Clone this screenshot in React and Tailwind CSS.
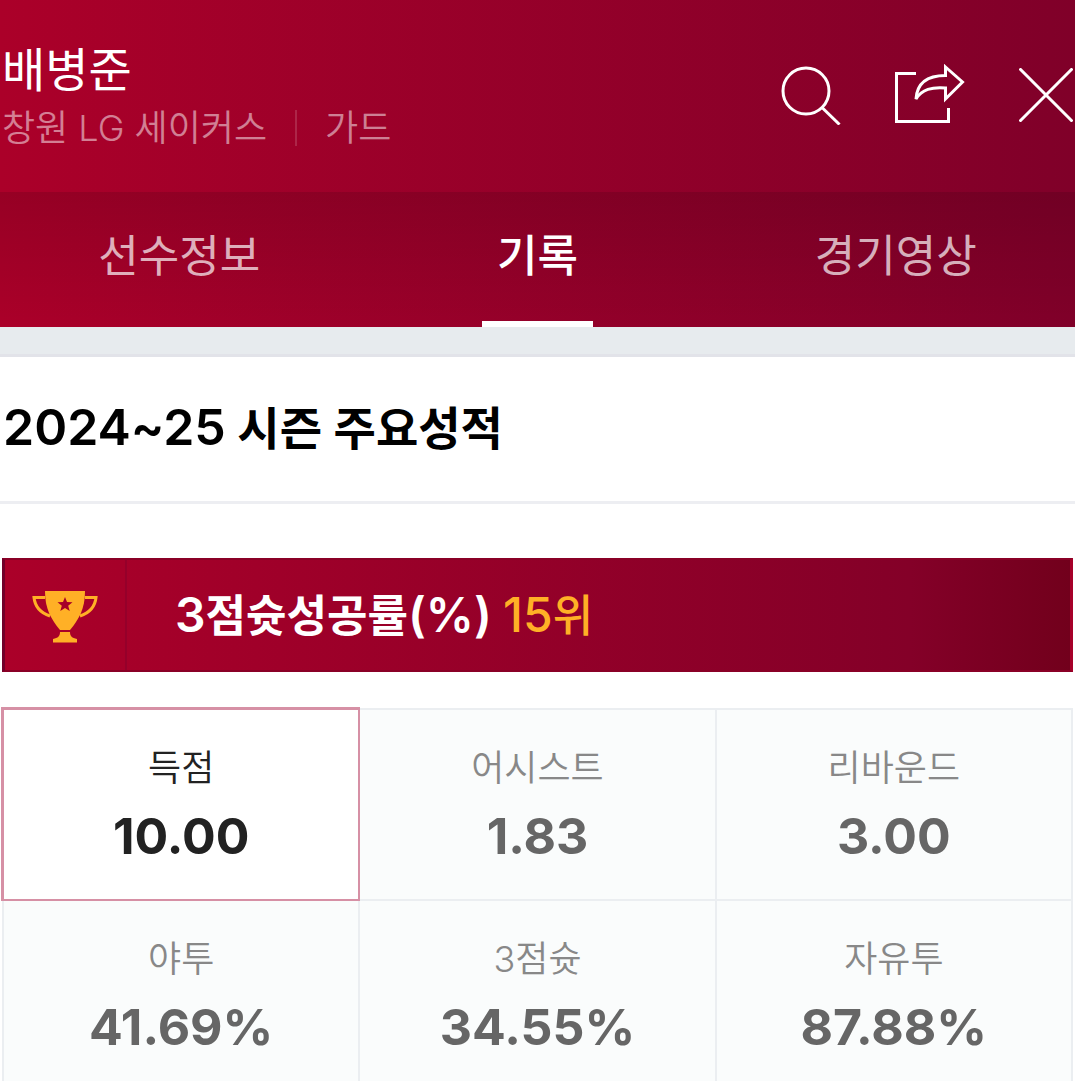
import { useState } from 'react';

const tabs = ['선수정보', '기록', '경기영상'];

const stats = [
  { label: '득점', value: '10.00' },
  { label: '어시스트', value: '1.83' },
  { label: '리바운드', value: '3.00' },
  { label: '야투', value: '41.69%' },
  { label: '3점슛', value: '34.55%' },
  { label: '자유투', value: '87.88%' },
];

const SearchIcon = () => (
  <svg width="60" height="60" viewBox="0 0 60 60" fill="none" stroke="currentColor" strokeWidth="3">
    <circle cx="25" cy="26" r="23" />
    <path d="M41 42.5L58.500 59.500" />
  </svg>
);

const ShareIcon = () => (
  <svg width="70" height="62" viewBox="0 0 70 62" fill="none" stroke="currentColor" strokeWidth="3">
    <path d="M21 9.500H1.500V57.500H53.500V44" />
    <path d="M50.500 3L67.500 18L50.500 35V24C37 23 27 25 21 35C22 19 32 11.500 50.500 11.500Z" />
  </svg>
);

const CloseIcon = () => (
  <svg width="54" height="54" viewBox="0 0 54 54" fill="none" stroke="currentColor" strokeWidth="3">
    <path d="M0.500 0.500L53.500 53.500M53.500 0.500L0.500 53.500" />
  </svg>
);

const TrophyIcon = () => (
  <svg width="66" height="52" viewBox="0 0 66 52" fill="#ffb026">
    <path d="M13 0H53C53 18 47 28 38 39H28C19 28 13 18 13 0Z" />
    <path d="M28 41H38C38 45 40 47 45 48V51.500H21V48C26 47 28 45 28 41Z" />
    <path d="M13 6.500H2C3 16 9 22 18 25M53 6.500H64C63 16 57 22 48 25" fill="none" stroke="#ffb026" strokeWidth="3" />
    <path d="M33 6L35 11L40.500 11.300L36.200 14.700L37.700 20L33 17L28.300 20L29.800 14.700L25.500 11.300L31 11Z" fill="#a60029" />
  </svg>
);

const App = () => {
  const [activeTab, setActiveTab] = useState('기록');
  const [activeStat, setActiveStat] = useState('득점');

  return (
    <div className="min-h-screen overflow-hidden bg-white font-['Inter','Noto_Sans_CJK_KR',sans-serif]">
      {/* Player header */}
      <header className="bg-linear-to-r from-[#ab0029] to-[#800029] text-white">
        <div className="flex h-48 items-start justify-between px-[2px]">
          <div className="pt-[42px]">
            <h1 className="text-[47px] leading-[56px]">배병준</h1>
            <p className="flex items-center text-4xl leading-[60px] text-white/50 font-[350]">
              <span>창원 LG 세이커스</span>
              <span className="mx-7 h-9 w-[2px] bg-white/15" />
              <span>가드</span>
            </p>
          </div>
          <div className="flex items-center gap-[54px] pt-16">
            <button type="button" aria-label="검색"><SearchIcon /></button>
            <button type="button" aria-label="공유"><ShareIcon /></button>
            <button type="button" aria-label="닫기"><CloseIcon /></button>
          </div>
        </div>

        {/* Tabs */}
        <nav className="grid h-[135px] grid-cols-3 bg-linear-to-b from-black/12 to-transparent">
          {tabs.map((tab) => (
            <button
              key={tab}
              type="button"
              onClick={() => setActiveTab(tab)}
              className="flex flex-col items-center justify-between pt-8 text-[44px] leading-[64px]"
            >
              <span className={tab === activeTab ? 'font-medium' : 'text-white/70'}>{tab}</span>
              {tab === activeTab && <span className="h-[6px] w-[111px] bg-white" />}
            </button>
          ))}
        </nav>
      </header>

      <div className="h-[30px] border-b-3 border-[#e2e3e9] bg-[#e7ebee]" />

      <main>
        <h2 className="h-[147px] border-b-3 border-[#edeef2] pt-[38px] pl-[3px] text-[46px] leading-[64px] font-semibold text-black">
          <span className="text-[50px]">2024~25</span> 시즌 주요성적
        </h2>

        <div className="px-[2px] pt-[54px]">
          {/* Ranking banner */}
          <div className="flex h-[114px] items-center border-y-2 border-r-3 border-l-3 border-t-[#8a0026] border-r-[#a60029] border-b-[#8a0026] border-l-[#72002a] bg-linear-to-r from-[#ab0029] via-[#840028] via-85% to-[#72001c]">
            <div className="flex h-full w-[122px] items-center justify-center border-r-2 border-[#95002a] pt-1">
              <TrophyIcon />
            </div>
            <p className="pl-12 text-[44px] leading-[64px] font-semibold text-white">
              <span className="text-[48px]">3</span>점슛성공률<span className="text-[48px]">(%)</span>{' '}
              <span className="font-medium text-[#ffb026]"><span className="text-[48px]">15</span>위</span>
            </p>
          </div>

          {/* Season averages */}
          <ul className="mt-9 grid grid-cols-3 border-t-2 border-l-2 border-[#ebeef1]">
            {stats.map(({ label, value }) => {
              const active = label === activeStat;
              return (
                <li key={label} className="h-[191px] border-r-2 border-b-2 border-[#ebeef1] bg-[#fafcfc]">
                  <button
                    type="button"
                    onClick={() => setActiveStat(label)}
                    className={`flex flex-col items-center pt-8 ${
                      active
                        ? '-mt-[3px] -ml-[3px] h-[194px] w-[calc(100%+5px)] border-2 border-t-3 border-l-3 border-[#d690a5] bg-white text-[#222]'
                        : 'h-full w-full text-[#666]'
                    }`}
                  >
                    <span className={`text-4xl leading-[52px] font-[350] ${active ? '' : 'text-[#888]'}`}>{label}</span>
                    <strong className="mt-3 text-[50px] leading-[60px] font-bold">{value}</strong>
                  </button>
                </li>
              );
            })}
          </ul>
        </div>
      </main>
    </div>
  );
};

export default App;
